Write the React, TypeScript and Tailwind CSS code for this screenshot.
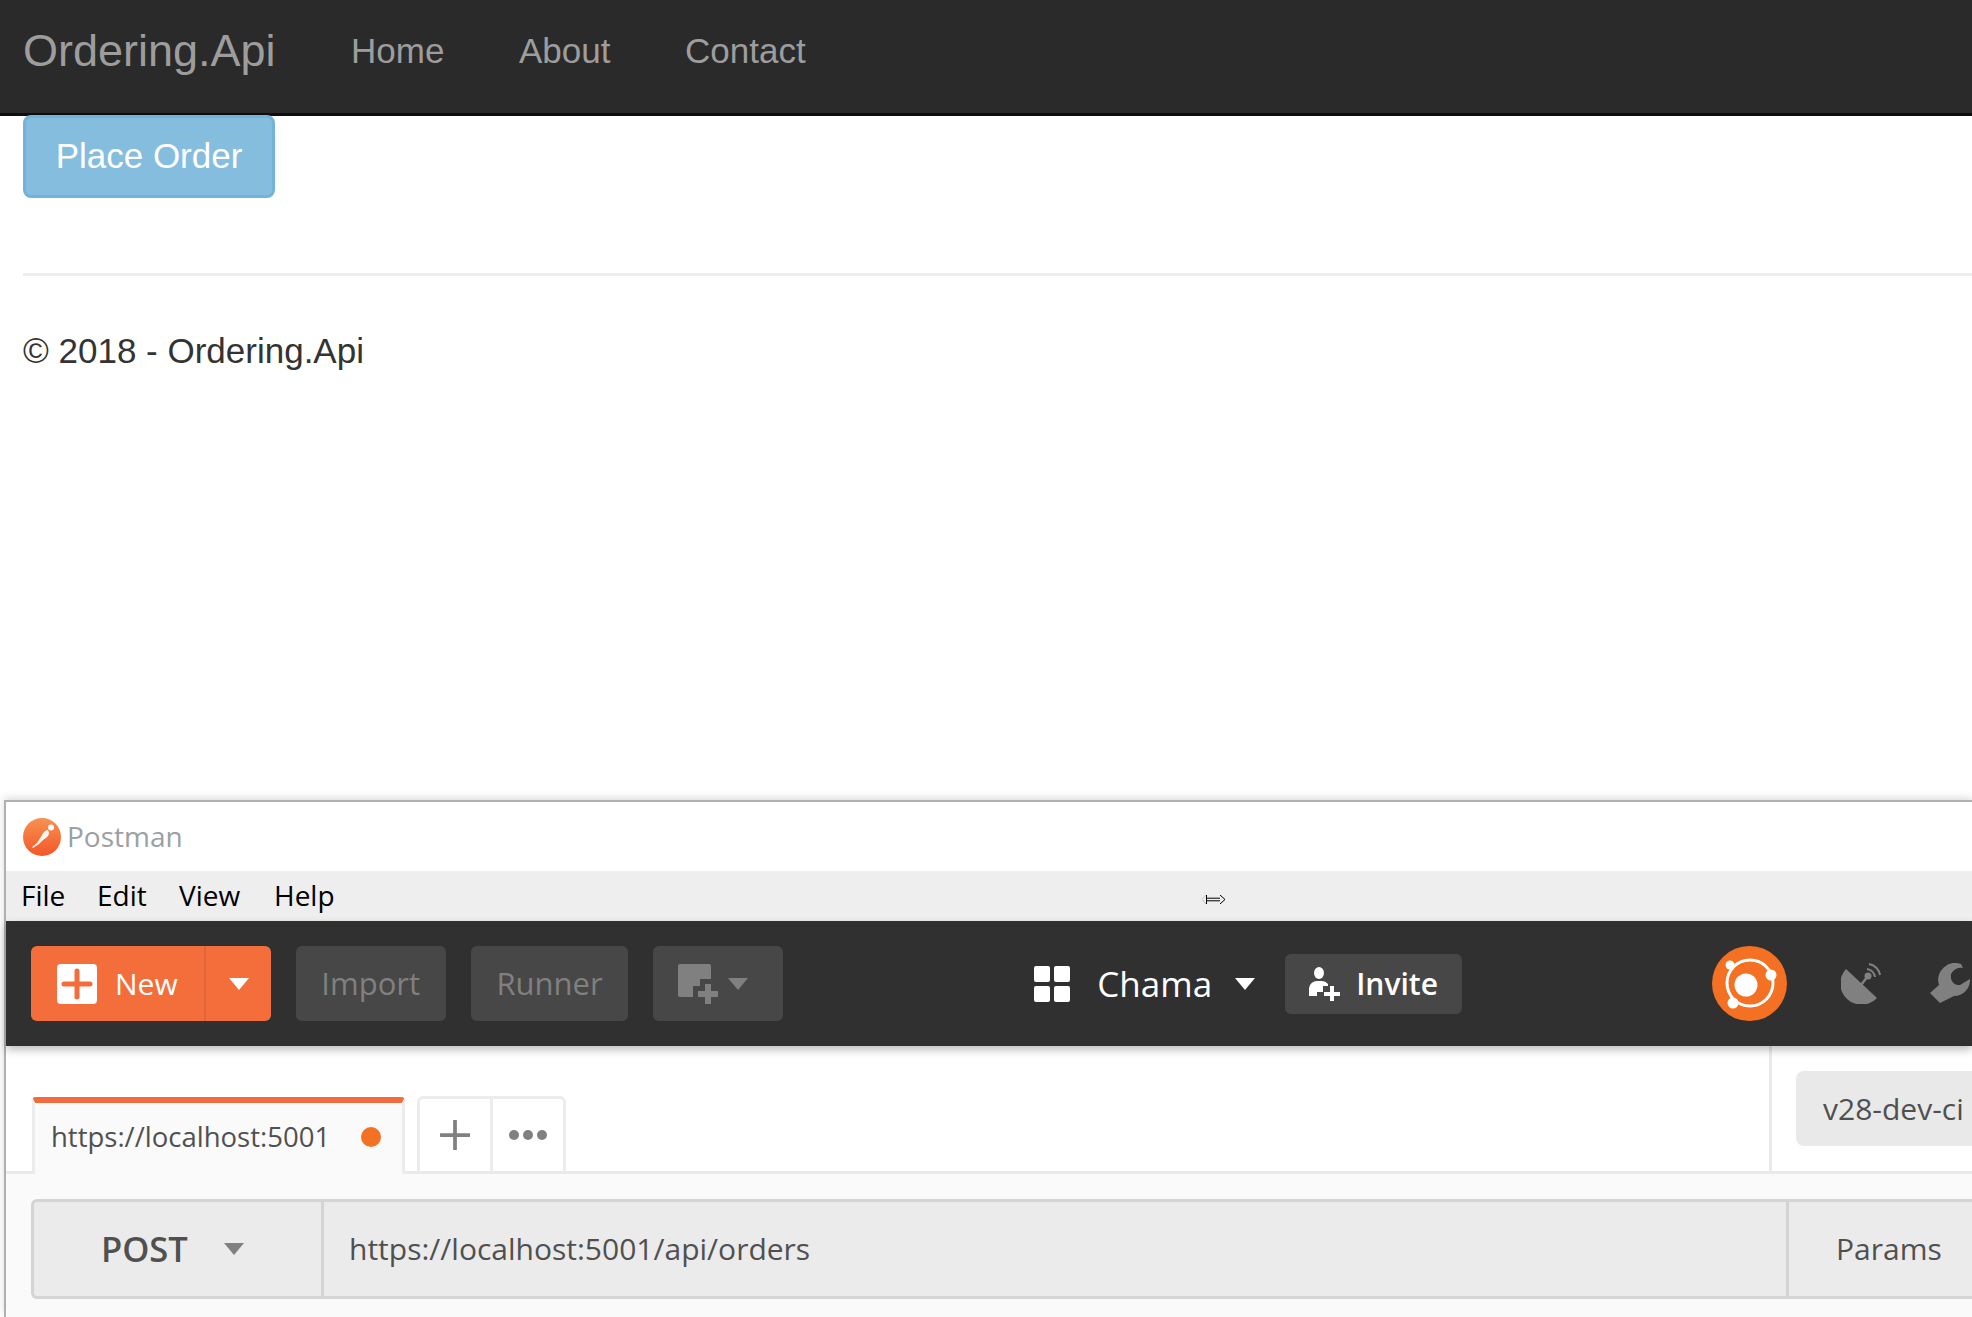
const Triangle = ({ className }: { className: string }) => (
  <svg viewBox="0 0 20 12" className={className} fill="currentColor" aria-hidden="true">
    <path d="M0 0h20L10 12z" />
  </svg>
);

function PostmanLogo() {
  return (
    <svg viewBox="0 0 38 38" className="h-[38px] w-[38px] shrink-0" aria-hidden="true">
      <defs>
        <linearGradient id="pm" x1="0" y1="0" x2="0" y2="1">
          <stop offset="0" stopColor="#f7924f" />
          <stop offset="1" stopColor="#f4562a" />
        </linearGradient>
      </defs>
      <circle cx="19" cy="19" r="19" fill="url(#pm)" />
      <path d="M9 29l5-4 5-8c1-3 4-5 6-5l1 3c0 3-3 5-6 7l-4 4-6 4z" fill="#fff" opacity="0.92" />
      <circle cx="28" cy="9.5" r="3" fill="#fff" />
    </svg>
  );
}

function SiteHeader() {
  return (
    <header className="flex h-[116px] shrink-0 items-start border-b-[3px] border-[#0e0e0e] bg-[#2a2a2a] pl-[23px] font-['Liberation_Sans',sans-serif]">
      <span className="mt-[23px] w-[328px] text-[45px] leading-[56px] text-[#9d9d9d]">Ordering.Api</span>
      <span className="mt-[30px] w-[168px] text-[35px] leading-[42px] text-[#9d9d9d]">Home</span>
      <span className="mt-[30px] w-[166px] text-[35px] leading-[42px] text-[#9d9d9d]">About</span>
      <span className="mt-[30px] text-[35px] leading-[42px] text-[#9d9d9d]">Contact</span>
    </header>
  );
}

function SiteBody() {
  return (
    <main className="h-[684px] shrink-0 bg-white pl-[23px] font-['Liberation_Sans',sans-serif]">
      <button className="flex h-[83px] w-[252px] -translate-y-px items-center justify-center rounded-[8px] border-[3px] border-[#74b3d9] bg-[#85bddf] text-[35px] text-white">
        Place Order
      </button>
      <div className="mt-[74px] h-[3px] bg-[#eeeeee]" />
      <p className="mt-[52px] text-[35px] leading-[45px] text-[#333333]">© 2018 - Ordering.Api</p>
    </main>
  );
}

function Toolbar() {
  return (
    <div className="relative flex h-[125px] shrink-0 items-center bg-[#303030] pl-[25px] shadow-[0_4px_8px_rgba(0,0,0,0.25)]">
      <div className="flex h-[75px] w-[240px] items-center rounded-[6px] bg-[#f46e3b] text-white">
        <div className="ml-[26px] flex h-[40px] w-[40px] items-center justify-center rounded-[4px] bg-white">
          <svg viewBox="0 0 40 40" className="h-[40px] w-[40px]" aria-hidden="true">
            <path d="M20 7v26M7 20h26" stroke="#f46e3b" strokeWidth="5" strokeLinecap="round" />
          </svg>
        </div>
        <span className="ml-[18px] w-[63px] text-[30px] leading-none">New</span>
        <div className="ml-[26px] h-full w-[2px] bg-[#e0653a]" />
        <Triangle className="ml-[23px] h-[12px] w-[20px] text-white" />
      </div>
      <div className="ml-[25px] flex h-[75px] w-[150px] items-center justify-center rounded-[6px] bg-[#474747] text-[31px] text-[#808080]">
        Import
      </div>
      <div className="ml-[25px] flex h-[75px] w-[158px] items-center justify-center rounded-[6px] bg-[#474747] text-[31px] text-[#808080]">
        Runner
      </div>
      <div className="ml-[25px] flex h-[75px] w-[130px] items-center rounded-[6px] bg-[#474747] text-[#808080]">
        <svg viewBox="0 0 40 40" className="ml-[25px] h-[40px] w-[40px]" aria-hidden="true">
          <path d="M2 0h29a2 2 0 012 2v13H22v7h-7v11H2a2 2 0 01-2-2V2a2 2 0 012-2z" fill="currentColor" />
          <path d="M27 20h6v7h7v6h-7v7h-6v-7h-7v-6h7z" fill="currentColor" />
        </svg>
        <Triangle className="ml-[10px] h-[12px] w-[20px]" />
      </div>
      <div className="ml-[251px] grid h-[36px] w-[36px] grid-cols-2 gap-[4px]">
        <span className="rounded-[2px] bg-white" />
        <span className="rounded-[2px] bg-white" />
        <span className="rounded-[2px] bg-white" />
        <span className="rounded-[2px] bg-white" />
      </div>
      <span className="ml-[27px] w-[138px] text-[35px] leading-none text-white">Chama</span>
      <Triangle className="h-[12px] w-[20px] text-white" />
      <div className="ml-[30px] flex h-[60px] w-[177px] items-center rounded-[6px] bg-[#474747] text-white">
        <svg viewBox="0 0 34 34" className="ml-[22px] h-[34px] w-[34px]" aria-hidden="true">
          <ellipse cx="12" cy="6" rx="5" ry="6" fill="currentColor" />
          <path d="M2 29v-8a8 8 0 018-7h4a8 8 0 017 3v2h-5v6h-6v4z" fill="currentColor" />
          <path d="M23 19h4v6h6v4h-6v5h-4v-5h-6v-4h6z" fill="currentColor" />
        </svg>
        <span className="ml-[15px] text-[30px] font-semibold leading-none">Invite</span>
      </div>
      <div className="ml-[250px] flex h-[75px] w-[75px] items-center justify-center rounded-full bg-[#f47023]">
        <svg viewBox="0 0 75 75" className="h-[75px] w-[75px]" aria-hidden="true">
          <circle cx="38" cy="37" r="23" fill="none" stroke="#fff" strokeWidth="3" />
          <circle cx="34" cy="39" r="11.5" fill="#fff" />
          <circle cx="18" cy="19" r="4.5" fill="#fff" />
          <circle cx="59" cy="29" r="5.5" fill="#fff" />
          <circle cx="21" cy="57" r="5.5" fill="#fff" />
        </svg>
      </div>
      <svg viewBox="0 0 40 41" className="ml-[54px] h-[41px] w-[40px] shrink-0 text-[#808080]" aria-hidden="true">
        <path d="M5 6L36 35A21 21 0 0 1 5 6z" fill="currentColor" />
        <path d="M20 22l7-9" stroke="currentColor" strokeWidth="2.5" />
        <circle cx="27" cy="13" r="3.5" fill="currentColor" />
        <path d="M26 6a9 9 0 018 8M28 1a13 13 0 0111 11" fill="none" stroke="currentColor" strokeWidth="2" />
      </svg>
      <svg viewBox="0 0 42 41" className="ml-[49px] h-[41px] w-[42px] shrink-0 text-[#808080]" aria-hidden="true">
        <path d="M31 1L33 5A11 11 0 0 0 21 11C20 18 24 23 30 22L40 16A16 16 0 0 1 24 33L10 40L0 30L9 22A17 17 0 0 1 31 1z" fill="currentColor" />
      </svg>
    </div>
  );
}

function TabsRow() {
  return (
    <div className="flex h-[128px] shrink-0 bg-white">
      <div className="flex h-full w-[1763px] items-end border-b-[3px] border-[#eaeaea] pl-[26px]">
        <div className="-mb-[3px] flex h-[77px] w-[373px] items-center rounded-t-[4px] border-x-[3px] border-t-[6px] border-x-[#ececec] border-t-[#f26b3a] bg-[#fafafa] pb-[3px] pl-[16px]">
          <span className="w-[310px] overflow-hidden whitespace-nowrap text-[27.5px] text-[#505050]">https://localhost:5001</span>
          <span className="h-[20px] w-[20px] shrink-0 rounded-full bg-[#f47023]" />
        </div>
        <div className="ml-[12px] flex h-[75px] w-[149px] rounded-t-[6px] border-x-[3px] border-t-[3px] border-[#ececec] text-[#808080]">
          <div className="flex w-[73px] items-center justify-center border-r-[3px] border-[#ececec]">
            <svg viewBox="0 0 32 32" className="h-[30px] w-[30px]" aria-hidden="true">
              <path d="M16 1v30M1 16h30" stroke="currentColor" strokeWidth="4" strokeLinecap="round" />
            </svg>
          </div>
          <div className="flex flex-1 items-center justify-center gap-[4px]">
            <span className="h-[10px] w-[10px] rounded-full bg-current" />
            <span className="h-[10px] w-[10px] rounded-full bg-current" />
            <span className="h-[10px] w-[10px] rounded-full bg-current" />
          </div>
        </div>
      </div>
      <div className="flex flex-1 items-start border-b-[3px] border-l-[3px] border-[#eaeaea] pl-[24px] pt-[25px]">
        <div className="flex h-[75px] flex-1 items-center rounded-l-[8px] bg-[#e9e9e9] pl-[27px] text-[30px] whitespace-nowrap text-[#505050]">v28-dev-ci</div>
      </div>
    </div>
  );
}

function RequestRow() {
  return (
    <div className="flex-1 bg-[#fafafa] pl-[25px] pt-[25px]">
      <div className="flex h-[100px] rounded-l-[6px] border-y-[3px] border-l-[3px] border-[#d4d4d4] bg-[#ebebeb] text-[#505050]">
        <div className="flex w-[290px] items-center border-r-[3px] border-[#d4d4d4] pl-[67px]">
          <span className="w-[123px] text-[34.5px] font-semibold">POST</span>
          <Triangle className="h-[12px] w-[20px] text-[#808080]" />
        </div>
        <div className="flex w-[1465px] items-center border-r-[3px] border-[#d4d4d4] pb-[2px] pl-[25px] text-[30px]">https://localhost:5001/api/orders</div>
        <div className="flex flex-1 items-center pb-[2px] pl-[47px] text-[30px]">Params</div>
      </div>
    </div>
  );
}

export default function App() {
  return (
    <div className="flex h-[1317px] w-[1972px] flex-col overflow-hidden bg-white">
      <SiteHeader />
      <SiteBody />
      <section className="relative ml-[4px] flex min-h-0 flex-1 flex-col border-l-2 border-t-2 border-[#b0b0b0] font-['Open_Sans',sans-serif] shadow-[0_-2px_8px_rgba(0,0,0,0.15)]">
        <div className="flex h-[69px] shrink-0 items-center gap-[6px] bg-white pl-[17px]">
          <PostmanLogo />
          <span className="pb-[2px] text-[28px] text-[#9aa0a4]">Postman</span>
        </div>
        <nav className="flex h-[50px] shrink-0 items-center bg-[#eeeeee] pb-[2px] pl-[15px] text-[28px] text-black">
          <span className="w-[76px]">File</span>
          <span className="w-[82px]">Edit</span>
          <span className="w-[95px]">View</span>
          <span>Help</span>
        </nav>
        <svg viewBox="0 0 23 9" className="absolute left-[1196px] top-[93px] h-[9px] w-[23px]" aria-hidden="true">
          <path d="M4 0L0 4.5L4 9" fill="none" stroke="#c4c4c4" strokeWidth="1" />
          <path d="M4.5 0v9M4.5 3.2H18M4.5 5.8H18M18 0l5 4.5L18 9" fill="none" stroke="#000" strokeWidth="1" />
        </svg>
        <Toolbar />
        <TabsRow />
        <RequestRow />
      </section>
    </div>
  );
}
